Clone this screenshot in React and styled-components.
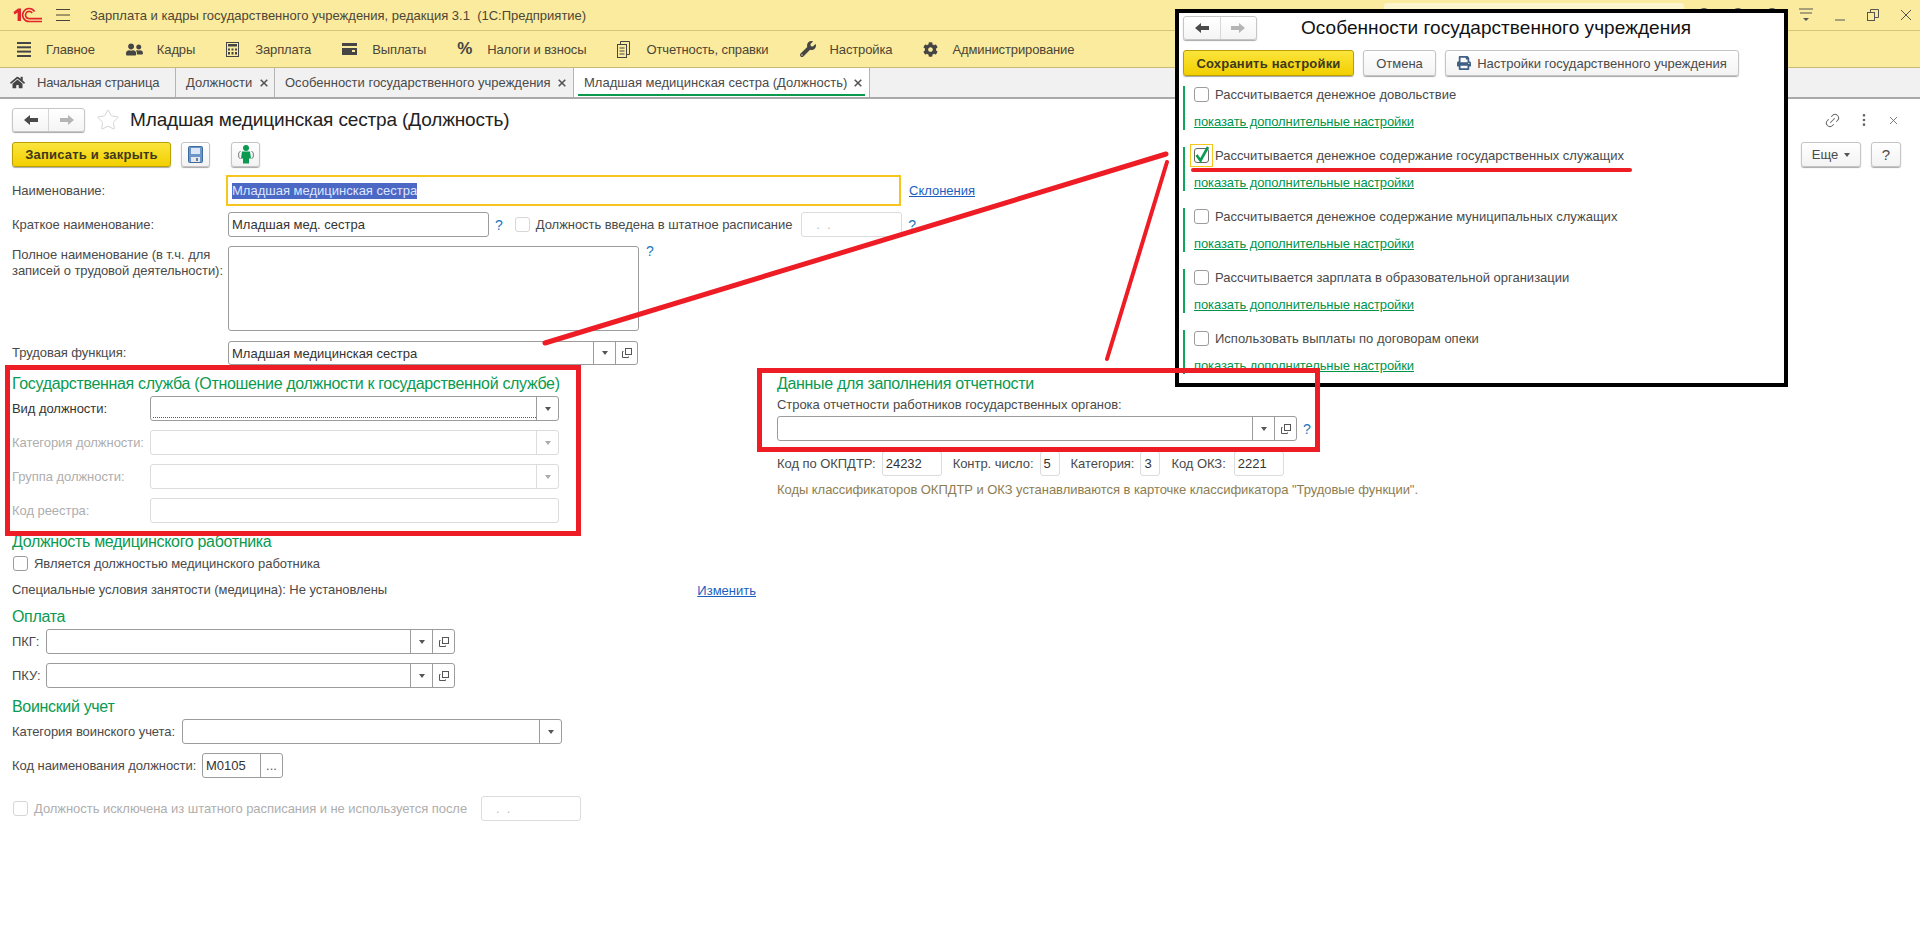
import React from 'react';
import styled, { createGlobalStyle } from 'styled-components';
import { FaHome, FaCog, FaWrench, FaPrint, FaUserFriends } from 'react-icons/fa';
import { Star, Link2, EllipsisVertical, X } from 'lucide-react';

const GlobalStyle = createGlobalStyle`
  html, body { margin: 0; padding: 0; background: #fff; overflow: hidden; }
  body { font-family: "Liberation Sans", Arial, sans-serif; font-size: 13px; color: #4a4a4a; }
`;

const Page = styled.div`
  position: relative;
  width: 1920px;
  height: 931px;
  overflow: hidden;
`;

const TitleBar = styled.div`
  display: flex;
  align-items: center;
  height: 30px;
  box-sizing: content-box;
  background: #fbeb9e;
  border-bottom: 1px solid #d6c574;
  padding-left: 13px;
`;

const BurgerSlot = styled.span`
  display: flex;
  margin-left: 13px;
`;

const AppTitle = styled.div`
  margin-left: 20px;
  color: #4d4636;
  white-space: pre;
`;

const SearchBox = styled.div`
  margin-left: auto;
  width: 300px;
  height: 24px;
  background: #fdf5cd;
  border-radius: 3px;
`;

const TitleTools = styled.div`
  display: flex;
  align-items: center;
  gap: 20px;
  margin-left: 13px;
  width: 102px;
`;

const TitleDot = styled.span`
  width: 14px;
  height: 14px;
  border-radius: 50%;
  border: 1px solid #555;
  box-sizing: border-box;
`;

const WinControls = styled.div`
  display: flex;
  align-items: center;
  gap: 21px;
  padding-right: 8px;
  color: #4a4a4a;
`;

const SectionBar = styled.nav`
  display: flex;
  align-items: center;
  height: 36px;
  background: #fbeb9e;
  border-bottom: 1px solid #c9ba7a;
  padding-left: 17px;
  gap: 31px;
`;

const SectionItem = styled.div`
  display: flex;
  align-items: center;
  color: #4d4636;
  letter-spacing: -0.12px;
  white-space: nowrap;
`;

const SectionIcon = styled.span`
  display: flex;
  align-items: center;
  width: ${p => p.$slot}px;
  color: #454545;
  font-size: 17px;
`;

const TabBar = styled.div`
  display: flex;
  height: 29px;
  background: #f1f1f1;
  border-bottom: 2px solid #a9a9a9;
`;

const Tab = styled.div`
  position: relative;
  display: flex;
  align-items: center;
  gap: ${p => p.$gap || 7}px;
  box-sizing: border-box;
  width: ${p => p.$w}px;
  padding-left: 10px;
  height: 100%;
  border-right: 1px solid #b4b4b4;
  background: ${p => (p.$active ? '#fff' : 'transparent')};
  color: #4a4a4a;
  letter-spacing: ${p => (p.$tight ? '-0.2px' : '0')};
  white-space: nowrap;
  ${p => p.$active && `
    &::after {
      content: "";
      position: absolute;
      left: 4px;
      right: 4px;
      bottom: 1px;
      height: 2px;
      background: #0b9a4c;
    }
  `}
`;

const TabClose = styled.span`
  display: flex;
  color: #555;
`;

const FormHeader = styled.div`
  display: flex;
  align-items: center;
  height: 24px;
  margin-top: 9px;
  padding: 0 20px 0 12px;
`;

const NavGroup = styled.div`
  display: flex;
  width: ${p => p.$w}px;
  height: 24px;
  box-sizing: border-box;
  background: linear-gradient(#fff, #f4f4f4);
  border: 1px solid #c6c6c6;
  border-radius: 3px;
  box-shadow: 0 1px 1px #a8a8a8;
`;

const NavCell = styled.div`
  flex: 1;
  display: flex;
  align-items: center;
  justify-content: center;
  & + & { border-left: 1px solid #d6d6d6; }
`;

const FavStar = styled(Star)`
  margin-left: 11px;
`;

const FormTitle = styled.div`
  margin-left: 10px;
  font-size: 19px;
  color: #222;
  letter-spacing: -0.14px;
  white-space: nowrap;
`;

const HeaderTools = styled.div`
  display: flex;
  align-items: center;
  gap: 15px;
  margin-left: auto;
  color: #666;
`;

const ChainIcon = styled(Link2)`
  transform: rotate(-45deg);
`;

const Toolbar = styled.div`
  display: flex;
  align-items: center;
  height: 25px;
  margin-top: 10px;
  padding: 0 18px 0 12px;
`;

const Button = styled.div`
  display: flex;
  align-items: center;
  justify-content: center;
  gap: 6px;
  box-sizing: border-box;
  width: ${p => p.$w}px;
  height: 100%;
  margin-left: ${p => p.$ml || 0}px;
  background: linear-gradient(#fff, #f3f3f3);
  border: 1px solid #c4c4c4;
  border-radius: 3px;
  box-shadow: 0 1px 1px #a8a8a8;
  color: #4a4a4a;
  font-size: ${p => p.$fs || 13}px;
  white-space: nowrap;
`;

const PrimaryButton = styled(Button)`
  background: linear-gradient(#fbe53c, #f2cf00);
  border-color: #b9a000;
  color: #40381a;
  font-weight: bold;
  letter-spacing: 0.2px;
`;

const TriangleDown = styled.span`
  display: inline-block;
  border-left: 3.5px solid transparent;
  border-right: 3.5px solid transparent;
  border-top: 4px solid ${p => (p.$off ? '#aaa' : '#555')};
`;

const FormBody = styled.div`
  padding-left: 12px;
`;

const Row = styled.div`
  display: flex;
  align-items: ${p => (p.$top ? 'flex-start' : 'center')};
  height: ${p => p.$h || 25}px;
  margin-top: ${p => p.$mt || 0}px;
  width: ${p => (p.$w ? `${p.$w}px` : 'auto')};
`;

const Label = styled.div`
  flex: none;
  width: ${p => (p.$w ? `${p.$w}px` : 'auto')};
  margin-left: ${p => p.$ml || 0}px;
  margin-top: ${p => p.$mt || 0}px;
  color: ${p => (p.$off ? '#aeaeae' : p.$dark ? '#333' : '#4a4a4a')};
  letter-spacing: -0.05px;
  line-height: 16px;
  white-space: pre;
`;

const Field = styled.div`
  position: relative;
  flex: none;
  display: flex;
  box-sizing: border-box;
  width: ${p => p.$w}px;
  height: ${p => p.$h || 25}px;
  margin-left: ${p => p.$ml || 0}px;
  border: 1px solid ${p => (p.$off ? '#dcdcdc' : '#9c9c9c')};
  border-radius: 3px;
  background: #fff;
`;

const FocusField = styled(Field)`
  border: 2px solid #f7c61e;
  border-radius: 0;
  align-items: center;
  padding-left: 4px;
`;

const FieldText = styled.div`
  flex: 1;
  padding: 0 3px;
  line-height: 23px;
  color: ${p => (p.$off ? '#bbb' : '#333')};
  white-space: pre;
`;

const Selected = styled.span`
  display: block;
  line-height: 16px;
  background: #4c68c5;
  color: #dfe6ff;
`;

const FieldBtn = styled.div`
  flex: none;
  display: flex;
  align-items: center;
  justify-content: center;
  width: 21px;
  border-left: 1px solid ${p => (p.$off ? '#dcdcdc' : '#9c9c9c')};
  color: #555;
`;

const RequiredMark = styled.div`
  position: absolute;
  left: 2px;
  right: 22px;
  bottom: 2px;
  border-bottom: 1px dotted #d8232a;
`;

const Hint = styled.span`
  flex: none;
  margin-left: ${p => p.$ml || 0}px;
  margin-top: ${p => p.$mt || 0}px;
  color: #1b78bd;
  font-size: 14px;
  line-height: 16px;
`;

const Box = styled.span`
  flex: none;
  display: flex;
  align-items: center;
  justify-content: center;
  box-sizing: border-box;
  width: 15px;
  height: 15px;
  margin-left: ${p => p.$ml || 0}px;
  margin-right: 6px;
  background: #fff;
  border: 1px solid ${p => (p.$off ? '#d6d6d6' : p.$on ? '#666' : '#9c9c9c')};
  border-radius: 3px;
`;

const BlueLink = styled.a`
  margin-left: ${p => (p.$push ? 'auto' : `${p.$ml || 0}px`)};
  color: #1c5fc0;
  text-decoration: underline;
  white-space: nowrap;
`;

const Columns = styled.div`
  display: grid;
  grid-template-columns: 765px 1fr;
  margin-top: 10px;
`;

const Heading = styled.div`
  height: 18px;
  margin-top: ${p => p.$mt || 0}px;
  line-height: 18px;
  font-size: 16px;
  letter-spacing: -0.33px;
  color: #0a9a50;
  white-space: nowrap;
`;

const Note = styled.div`
  margin-top: 6px;
  line-height: 16px;
  color: #8d7d52;
  letter-spacing: -0.05px;
  white-space: nowrap;
`;

const Popup = styled.div`
  position: absolute;
  left: 1175px;
  top: 9px;
  width: 613px;
  height: 378px;
  box-sizing: border-box;
  padding: 3px 0 0 4px;
  background: #fff;
  border: 4px solid #000;
`;

const PopupHead = styled.div`
  display: flex;
  align-items: center;
  height: 24px;
`;

const PopupTitle = styled.div`
  margin-left: 44px;
  font-size: 19px;
  color: #111;
  letter-spacing: 0.05px;
  white-space: nowrap;
`;

const PopupButtons = styled.div`
  display: flex;
  height: 26px;
  margin-top: 10px;
`;

const OptionList = styled.div`
  display: flex;
  flex-direction: column;
  gap: 17px;
  margin-top: 10px;
`;

const Option = styled.div`
  display: flex;
  flex-direction: column;
  justify-content: space-between;
  height: 44px;
  padding: 1px 0 1px 9px;
  box-sizing: border-box;
  border-left: 2px solid #0fa55a;
`;

const OptionLine = styled.div`
  position: relative;
  display: flex;
  align-items: center;
  height: 15px;
  color: #4a4a4a;
  white-space: nowrap;
`;

const CheckFocus = styled.span`
  position: absolute;
  left: -4px;
  top: -4px;
  width: 23px;
  height: 23px;
  box-sizing: border-box;
  border: 1px solid #f7c61e;
`;

const CheckMark = styled.svg`
  overflow: visible;
`;

const GreenLink = styled.a`
  color: #00944b;
  line-height: 15px;
  letter-spacing: -0.1px;
  text-decoration: underline;
  white-space: nowrap;
`;

const RedFrame = styled.div`
  position: absolute;
  left: ${p => p.$x}px;
  top: ${p => p.$y}px;
  width: ${p => p.$w}px;
  height: ${p => p.$h}px;
  box-sizing: border-box;
  border: 5px solid #ee1c25;
`;

const Scribbles = styled.svg`
  position: absolute;
  left: 0;
  top: 0;
  pointer-events: none;
`;

const Logo1C = () => (
  <svg width="30" height="16" viewBox="0 0 30 16" fill="none" stroke="#e1262b">
    <path d="M0.5 5 L5 1.5 H8 V14 H4.6 V5.5 L1.6 7.6 Z" fill="#e1262b" stroke="none" />
    <path d="M29 14.5 H16 A6.5 6.5 0 1 1 21.6 4.5" strokeWidth="1.6" />
    <path d="M29 11.6 H16 A3.6 3.6 0 1 1 19.2 6.2" strokeWidth="1.6" />
  </svg>
);

const Burger = ({ w = 14, color = '#4a4335' }) => (
  <svg width={w} height="12" viewBox={`0 0 ${w} 12`} stroke={color}>
    <path d={`M0 .5H${w}M0 6H${w}M0 11.5H${w}`} />
  </svg>
);

const ListIcon = () => (
  <svg width="14" height="15" viewBox="0 0 14 15" fill="#454545">
    <rect y="0" width="14" height="2" /><rect y="4.3" width="14" height="2" />
    <rect y="8.6" width="14" height="2" /><rect y="13" width="14" height="2" />
  </svg>
);

const CalcIcon = () => (
  <svg width="13" height="15" viewBox="0 0 13 15">
    <rect x=".5" y=".5" width="12" height="14" fill="none" stroke="#454545" />
    <rect x="2" y="2" width="9" height="2.5" fill="#454545" />
    <path d="M2 6.5h2v2H2zM5.5 6.5h2v2h-2zM9 6.5h2v2H9zM2 10h2v2.5H2zM5.5 10h2v2.5h-2zM9 10h2v2.5H9z" fill="#454545" />
  </svg>
);

const WalletIcon = () => (
  <svg width="15" height="12" viewBox="0 0 15 12" fill="#454545">
    <rect width="15" height="3" y="0" /><rect width="15" height="7" y="5" />
    <rect x="10" y="7" width="3" height="2" fill="#fbeb9e" />
  </svg>
);

const DocsIcon = () => (
  <svg width="13" height="17" viewBox="0 0 13 17" fill="none" stroke="#454545">
    <rect x=".5" y="3.5" width="9" height="13" />
    <path d="M3.5 3.5v-3h9v13h-3M2.5 7h5M2.5 10h5M2.5 13h5" />
  </svg>
);

const ArrowLeft = ({ color = '#4a4a4a' }) => (
  <svg width="14" height="12" viewBox="0 0 14 12" fill={color}>
    <path d="M0 6 6 1v3h8v4H6v3z" />
  </svg>
);

const ArrowRight = ({ color = '#b5b5b5' }) => (
  <svg width="14" height="12" viewBox="0 0 14 12" fill={color}>
    <path d="M14 6 8 1v3H0v4h8v3z" />
  </svg>
);

const FloppyIcon = () => (
  <svg width="15" height="17" viewBox="0 0 15 17">
    <rect x=".5" y=".5" width="14" height="16" rx="1" fill="#6d96c8" stroke="#3f6a9e" />
    <rect x="3" y="2" width="9" height="6" fill="#dbe7f5" />
    <rect x="3" y="11" width="9" height="5" fill="#e8e8e8" />
    <rect x="8" y="12" width="2" height="3" fill="#5d7fa8" />
  </svg>
);

const PersonIcon = () => (
  <svg width="16" height="19" viewBox="0 0 16 19" fill="none">
    <circle cx="8" cy="3" r="3" fill="#0a9a50" />
    <path d="M4 6.500h8l1 7h-2v5H5v-5H3z" fill="#0a9a50" />
    <path d="M2.500 6 L.7 8v4l1.800 2M13.500 6l1.800 2v4l-1.800 2" stroke="#777" />
  </svg>
);

const OpenIcon = () => (
  <svg width="10" height="10" viewBox="0 0 10 10" fill="none" stroke="#555">
    <rect x="3.500" y=".5" width="6" height="6" />
    <path d="M1.500 3.500H.5v6h6V8.500" />
  </svg>
);

const CloseMark = ({ size = 8 }) => (
  <svg width={size} height={size} viewBox="0 0 8 8" stroke="#555" strokeWidth="1.600">
    <path d="M.7.7l6.600 6.600M7.300.7.7 7.300" />
  </svg>
);

const Check = () => (
  <CheckMark width="13" height="13" viewBox="0 0 13 13" fill="none" stroke="#0a9a50" strokeWidth="2.600">
    <path d="M1.500 6 5.500 11.500 13 -2" />
  </CheckMark>
);

const Dropdown = ({ off }) => (
  <FieldBtn $off={off}><TriangleDown $off={off} /></FieldBtn>
);

const OpenBtn = () => <FieldBtn><OpenIcon /></FieldBtn>;

const options = [
  'Рассчитывается денежное довольствие',
  'Рассчитывается денежное содержание государственных служащих',
  'Рассчитывается денежное содержание муниципальных служащих',
  'Рассчитывается зарплата в образовательной организации',
  'Использовать выплаты по договорам опеки',
];

const sections = [
  { icon: <ListIcon />, slot: 29, text: 'Главное' },
  { icon: <FaUserFriends />, slot: 31, text: 'Кадры' },
  { icon: <CalcIcon />, slot: 29, text: 'Зарплата' },
  { icon: <WalletIcon />, slot: 30, text: 'Выплаты' },
  { icon: <b>%</b>, slot: 30, text: 'Налоги и взносы' },
  { icon: <DocsIcon />, slot: 29, text: 'Отчетность, справки' },
  { icon: <FaWrench size={16} />, slot: 30, text: 'Настройка' },
  { icon: <FaCog size={15} />, slot: 29, text: 'Администрирование' },
];

export default function App() {
  return (
    <Page>
      <GlobalStyle />
      <TitleBar>
        <Logo1C />
        <BurgerSlot><Burger /></BurgerSlot>
        <AppTitle>Зарплата и кадры государственного учреждения, редакция 3.1  (1С:Предприятие)</AppTitle>
        <SearchBox />
        <TitleTools><TitleDot /><TitleDot /><TitleDot /></TitleTools>
        <WinControls>
          <svg width="14" height="14" viewBox="0 0 14 14" stroke="#555" fill="#555">
            <path d="M0 1h14M1 5h12" fill="none" /><path d="M4 10h6l-3 3z" stroke="none" />
          </svg>
          <svg width="12" height="12" viewBox="0 0 12 12" stroke="#555"><path d="M1 11h10" /></svg>
          <svg width="12" height="12" viewBox="0 0 12 12" fill="none" stroke="#555">
            <rect x=".5" y="3.500" width="7" height="8" /><path d="M3.500 3V.5h8v8H8" />
          </svg>
          <svg width="12" height="12" viewBox="0 0 12 12" stroke="#555"><path d="M1 1l10 10M11 1 1 11" /></svg>
        </WinControls>
      </TitleBar>

      <SectionBar>
        {sections.map(s => (
          <SectionItem key={s.text}>
            <SectionIcon $slot={s.slot}>{s.icon}</SectionIcon>
            {s.text}
          </SectionItem>
        ))}
      </SectionBar>

      <TabBar>
        <Tab $w={176} $gap={12} $tight><FaHome size={15} color="#454545" />Начальная страница</Tab>
        <Tab $w={99} $gap={8}>Должности<TabClose><CloseMark /></TabClose></Tab>
        <Tab $w={299}>Особенности государственного учреждения<TabClose><CloseMark /></TabClose></Tab>
        <Tab $w={296} $active>Младшая медицинская сестра (Должность)<TabClose><CloseMark /></TabClose></Tab>
      </TabBar>

      <FormHeader>
        <NavGroup $w={73}>
          <NavCell><ArrowLeft /></NavCell>
          <NavCell><ArrowRight /></NavCell>
        </NavGroup>
        <FavStar size={24} color="#d4d4d4" strokeWidth={1} />
        <FormTitle>Младшая медицинская сестра (Должность)</FormTitle>
        <HeaderTools>
          <ChainIcon size={17} strokeWidth={1.4} />
          <EllipsisVertical size={16} strokeWidth={2} />
          <X size={13} strokeWidth={1.6} />
        </HeaderTools>
      </FormHeader>

      <Toolbar>
        <PrimaryButton $w={159}>Записать и закрыть</PrimaryButton>
        <Button $w={29} $ml={10}><FloppyIcon /></Button>
        <Button $w={29} $ml={21}><PersonIcon /></Button>
        <Button $w={60} $ml={1541}>Еще <TriangleDown /></Button>
        <Button $w={30} $ml={10} $fs={15}>?</Button>
      </Toolbar>

      <FormBody>
        <Row $h={31} $mt={8}>
          <Label $w={214}>Наименование:</Label>
          <FocusField $w={675} $h={31}><Selected>Младшая медицинская сестра</Selected></FocusField>
          <BlueLink $ml={8}>Склонения</BlueLink>
        </Row>
        <Row $mt={6}>
          <Label $w={216}>Краткое наименование:</Label>
          <Field $w={261}><FieldText>Младшая мед. сестра</FieldText></Field>
          <Hint $ml={6}>?</Hint>
          <Box $ml={12} $off />
          <Label>Должность введена в штатное расписание</Label>
          <Field $w={101} $ml={9} $off><FieldText $off>   .  .</FieldText></Field>
          <Hint $ml={6}>?</Hint>
        </Row>
        <Row $h={85} $mt={9} $top>
          <Label $w={216} $mt={1}>{'Полное наименование (в т.ч. для\nзаписей о трудовой деятельности):'}</Label>
          <Field $w={411} $h={85} />
          <Hint $ml={7} $mt={-3}>?</Hint>
        </Row>
        <Row $h={24} $mt={10}>
          <Label $w={216}>Трудовая функция:</Label>
          <Field $w={410} $h={24}>
            <FieldText>Младшая медицинская сестра</FieldText>
            <Dropdown /><OpenBtn />
          </Field>
        </Row>

        <Columns>
          <div>
            <Heading>Государственная служба (Отношение должности к государственной службе)</Heading>
            <Row $mt={3}>
              <Label $w={138} $dark>Вид должности:</Label>
              <Field $w={409}><FieldText /><RequiredMark /><Dropdown /></Field>
            </Row>
            <Row $mt={9}>
              <Label $w={138} $off>Категория должности:</Label>
              <Field $w={409} $off><FieldText /><Dropdown off /></Field>
            </Row>
            <Row $mt={9}>
              <Label $w={138} $off>Группа должности:</Label>
              <Field $w={409} $off><FieldText /><Dropdown off /></Field>
            </Row>
            <Row $mt={9}>
              <Label $w={138} $off>Код реестра:</Label>
              <Field $w={409} $off />
            </Row>

            <Heading $mt={10}>Должность медицинского работника</Heading>
            <Row $h={15} $mt={5}>
              <Box $ml={1} />
              <Label>Является должностью медицинского работника</Label>
            </Row>
            <Row $h={24} $mt={7} $w={744}>
              <Label>Специальные условия занятости (медицина): Не установлены</Label>
              <BlueLink $push>Изменить</BlueLink>
            </Row>

            <Heading $mt={6}>Оплата</Heading>
            <Row $mt={3}>
              <Label $w={34}>ПКГ:</Label>
              <Field $w={409}><FieldText /><Dropdown /><OpenBtn /></Field>
            </Row>
            <Row $mt={9}>
              <Label $w={34}>ПКУ:</Label>
              <Field $w={409}><FieldText /><Dropdown /><OpenBtn /></Field>
            </Row>

            <Heading $mt={10}>Воинский учет</Heading>
            <Row $mt={3}>
              <Label $w={170}>Категория воинского учета:</Label>
              <Field $w={380}><FieldText /><Dropdown /></Field>
            </Row>
            <Row $mt={9}>
              <Label $w={190}>Код наименования должности:</Label>
              <Field $w={81}><FieldText>М0105</FieldText><FieldBtn>...</FieldBtn></Field>
            </Row>
            <Row $mt={18}>
              <Box $ml={1} $off />
              <Label $off>Должность исключена из штатного расписания и не используется после</Label>
              <Field $w={100} $ml={14} $off><FieldText $off>   .  .</FieldText></Field>
            </Row>
          </div>

          <div>
            <Heading>Данные для заполнения отчетности</Heading>
            <Label $mt={4}>Строка отчетности работников государственных органов:</Label>
            <Row $mt={3}>
              <Field $w={520}><FieldText /><Dropdown /><OpenBtn /></Field>
              <Hint $ml={6}>?</Hint>
            </Row>
            <Row $mt={10}>
              <Label>Код по ОКПДТР:</Label>
              <Field $w={60} $ml={6} $off><FieldText>24232</FieldText></Field>
              <Label $ml={11}>Контр. число:</Label>
              <Field $w={20} $ml={6} $off><FieldText>5</FieldText></Field>
              <Label $ml={11}>Категория:</Label>
              <Field $w={20} $ml={6} $off><FieldText>3</FieldText></Field>
              <Label $ml={11}>Код ОКЗ:</Label>
              <Field $w={50} $ml={8} $off><FieldText>2221</FieldText></Field>
            </Row>
            <Note>Коды классификаторов ОКПДТР и ОКЗ устанавливаются в карточке классификатора "Трудовые функции".</Note>
          </div>
        </Columns>
      </FormBody>

      <Popup>
        <PopupHead>
          <NavGroup $w={74}>
            <NavCell><ArrowLeft /></NavCell>
            <NavCell><ArrowRight /></NavCell>
          </NavGroup>
          <PopupTitle>Особенности государственного учреждения</PopupTitle>
        </PopupHead>
        <PopupButtons>
          <PrimaryButton $w={171}>Сохранить настройки</PrimaryButton>
          <Button $w={73} $ml={9}>Отмена</Button>
          <Button $w={294} $ml={9}><FaPrint size={14} color="#3f5f85" />Настройки государственного учреждения</Button>
        </PopupButtons>
        <OptionList>
          {options.map((text, i) => (
            <Option key={text}>
              <OptionLine>
                {i === 1 && <CheckFocus />}
                <Box $on={i === 1}>{i === 1 && <Check />}</Box>
                {text}
              </OptionLine>
              <GreenLink>показать дополнительные настройки</GreenLink>
            </Option>
          ))}
        </OptionList>
      </Popup>

      <RedFrame $x={5} $y={365} $w={576} $h={171} />
      <RedFrame $x={757} $y={368} $w={563} $h={84} />
      <Scribbles width="1920" height="931" fill="none" stroke="#ee1c25" strokeLinecap="round">
        <path d="M545 343 L1166 154" strokeWidth="5" />
        <path d="M1107 359 L1167 162" strokeWidth="4" />
        <path d="M1193 170 H1630" strokeWidth="4" />
      </Scribbles>
    </Page>
  );
}
